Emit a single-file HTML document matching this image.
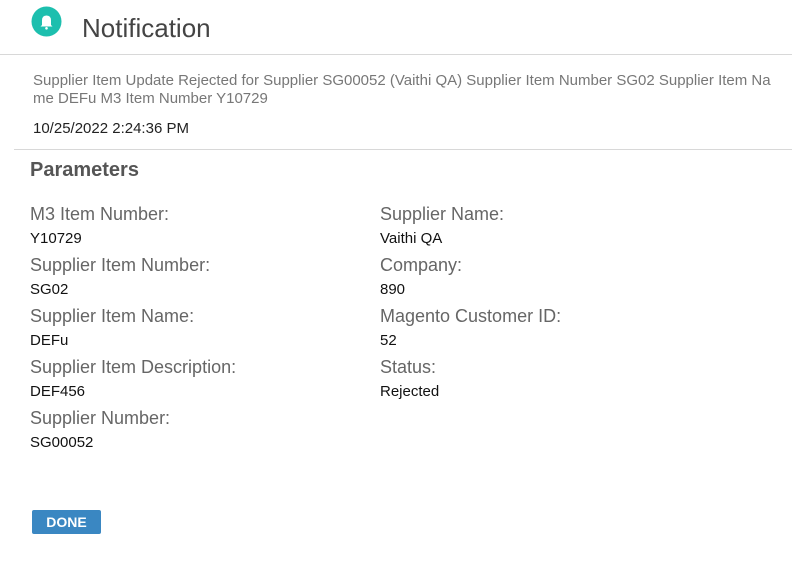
<!DOCTYPE html>
<html><head><style>
body{margin:0;width:792px;height:562px;background:#fff;font-family:"Liberation Sans",Arial,sans-serif;position:relative;overflow:hidden}
.a{position:absolute;white-space:nowrap}
.l{font-size:18px;color:#666}
.v{font-size:15px;color:#111}
</style></head><body>
<svg class="a" style="left:31px;top:6px" width="31" height="31" viewBox="0 0 31 31">
<circle cx="15.5" cy="15.5" r="15" fill="#1dbfae"/>
<path d="M11 19 L11 14.5 Q11 9.5 15.5 9.5 Q20 9.5 20 14.5 L20 19 L21.5 20.5 L9.5 20.5 Z" fill="#fff"/>
<circle cx="15.5" cy="22.3" r="1.3" fill="#fff"/>
</svg>
<div class="a" style="left:82px;top:13px;font-size:26px;color:#444">Notification</div>
<div class="a" style="left:0;top:54px;width:792px;height:1px;background:#d8d8d8"></div>
<div class="a" style="left:33px;top:72px;font-size:15px;color:#777;line-height:18px">Supplier Item Update Rejected for Supplier SG00052 (Vaithi QA) Supplier Item Number SG02 Supplier Item Na<br>me DEFu M3 Item Number Y10729</div>
<div class="a" style="left:33px;top:120px;font-size:15px;color:#222">10/25/2022 2:24:36 PM</div>
<div class="a" style="left:14px;top:149px;width:778px;height:1px;background:#d8d8d8"></div>
<div class="a" style="left:30px;top:159px;font-size:20px;font-weight:bold;color:#555">Parameters</div>
<div class="a l" style="left:30px;top:204px">M3 Item Number:</div>
<div class="a v" style="left:30px;top:230px">Y10729</div>
<div class="a l" style="left:30px;top:255px">Supplier Item Number:</div>
<div class="a v" style="left:30px;top:281px">SG02</div>
<div class="a l" style="left:30px;top:306px">Supplier Item Name:</div>
<div class="a v" style="left:30px;top:332px">DEFu</div>
<div class="a l" style="left:30px;top:357px">Supplier Item Description:</div>
<div class="a v" style="left:30px;top:383px">DEF456</div>
<div class="a l" style="left:30px;top:408px">Supplier Number:</div>
<div class="a v" style="left:30px;top:434px">SG00052</div>
<div class="a l" style="left:380px;top:204px">Supplier Name:</div>
<div class="a v" style="left:380px;top:230px">Vaithi QA</div>
<div class="a l" style="left:380px;top:255px">Company:</div>
<div class="a v" style="left:380px;top:281px">890</div>
<div class="a l" style="left:380px;top:306px">Magento Customer ID:</div>
<div class="a v" style="left:380px;top:332px">52</div>
<div class="a l" style="left:380px;top:357px">Status:</div>
<div class="a v" style="left:380px;top:383px">Rejected</div>
<div class="a" style="left:32px;top:510px;width:69px;height:24px;background:#3a87c2;border-radius:2px;color:#fff;font-weight:bold;font-size:14px;text-align:center;line-height:24px">DONE</div>
</body></html>
